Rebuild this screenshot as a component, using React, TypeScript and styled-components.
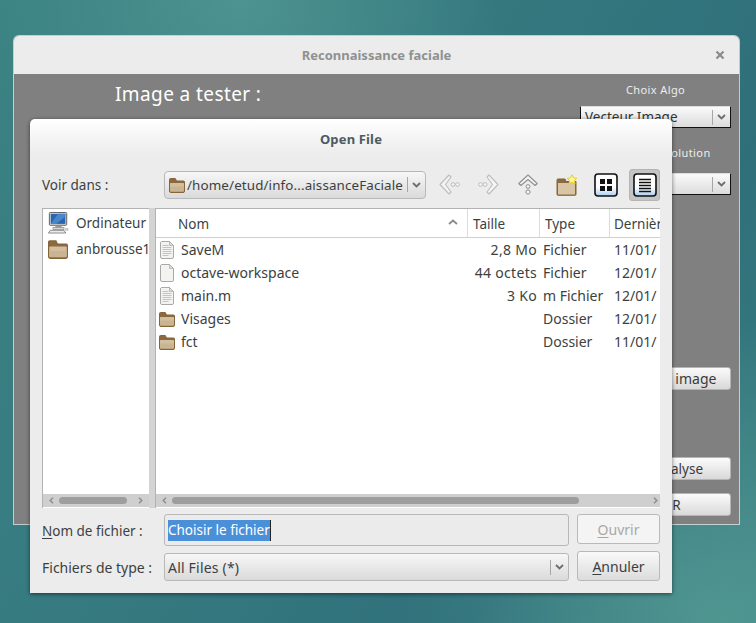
import React from "react";
import styled, { createGlobalStyle } from "styled-components";

const FONT = `"Noto Sans", "Open Sans", "DejaVu Sans", sans-serif`;

const Global = createGlobalStyle`
  html, body { margin: 0; padding: 0; background: #3f8584; }
  body { font-family: ${FONT}; }
`;

const Desktop = styled.div`
  position: relative;
  width: 756px;
  height: 623px;
  overflow: hidden;
  background:
    radial-gradient(ellipse 260px 220px at 240px 0px, #4d9390 0%, rgba(77,147,144,0) 100%),
    radial-gradient(ellipse 320px 300px at 720px 620px, #4f9590 0%, rgba(79,149,144,0) 100%),
    linear-gradient(120deg, #3b8283 0%, #35797f 45%, #2f6f7a 75%, #3b8083 100%);
`;

const ParentWindow = styled.section`
  position: absolute;
  left: 14px;
  top: 36px;
  width: 725px;
  height: 488px;
  border-radius: 5px 5px 0 0;
  background: #808080;
  box-shadow: 0 0 0 1px rgba(235, 235, 235, 0.75);
  display: flex;
  flex-direction: column;
`;

const ParentTitle = styled.header`
  height: 38px;
  flex: none;
  background: #ececec;
  border-radius: 5px 5px 0 0;
  display: flex;
  align-items: center;
  justify-content: center;
  position: relative;
  color: #8f9191;
  font-size: 13px;
  font-weight: 700;
`;

const CloseGlyph = styled.svg`
  position: absolute;
  right: 14px;
  top: 14px;
  width: 10px;
  height: 10px;
`;

const ParentBody = styled.div`
  flex: 1;
  display: flex;
  justify-content: space-between;
  padding: 0 8px 0 101px;
`;

const Heading = styled.h1`
  margin: 6px 0 0;
  font-size: 19px;
  line-height: 28px;
  font-weight: 400;
  color: #fff;
  letter-spacing: 0.4px;
`;

const SideColumn = styled.div`
  width: 151px;
  display: flex;
  flex-direction: column;
  align-items: stretch;
`;

const SideLabel = styled.div<{ $top: number }>`
  margin-top: ${(p) => p.$top}px;
  height: 18px;
  line-height: 18px;
  font-size: 11px;
  letter-spacing: 0.4px;
  color: #eee;
  text-align: center;
  white-space: nowrap;
`;

const SideSelect = styled.div<{ $top: number }>`
  margin-top: ${(p) => p.$top}px;
  height: 22px;
  box-sizing: border-box;
  border: 1px solid #111;
  border-top-color: #ddd;
  border-bottom-color: #111;
  background: linear-gradient(#fafafa, #dcdcdc);
  display: flex;
  align-items: center;
  justify-content: space-between;
  padding-left: 4px;
  font-size: 13.5px;
  color: #333;
`;

const SelectArrow = styled.span`
  width: 17px;
  height: 15px;
  border-left: 1px solid #a6a6a6;
  display: flex;
  align-items: center;
  justify-content: center;
  flex: none;
`;

const SideButton = styled.button<{ $top: number; $right?: number; $size?: number }>`
  margin-top: ${(p) => p.$top}px;
  height: 23px;
  box-sizing: border-box;
  border: 1px solid #b5b5b5;
  border-radius: 3px;
  background: linear-gradient(#fbfbfb, #d9d9d9);
  font: ${(p) => p.$size ?? 13.5}px ${FONT};
  color: #3a3a3a;
  padding: 0 ${(p) => p.$right ?? 0}px 0 0;
  white-space: nowrap;
`;

const Dialog = styled.section`
  position: absolute;
  left: 30px;
  top: 119px;
  width: 642px;
  height: 474px;
  box-sizing: border-box;
  border-radius: 5px 5px 0 0;
  background: linear-gradient(#ffffff 0, #ececec 36px);
  box-shadow: 0 1px 4px rgba(0, 0, 0, 0.55);
  padding: 0 12px;
  display: flex;
  flex-direction: column;
  color: #3a3f41;
`;

const DialogTitle = styled.header`
  height: 42px;
  line-height: 41px;
  text-align: center;
  font-size: 13px;
  font-weight: 700;
  letter-spacing: 0.15px;
  color: #4e5a61;
  flex: none;
`;

const Toolbar = styled.div`
  height: 47px;
  flex: none;
  display: flex;
  align-items: center;
`;

const FieldLabel = styled.label`
  width: 122px;
  flex: none;
  font-size: 13.5px;
  color: #3c3f41;
  white-space: nowrap;
  u { text-decoration-thickness: 1px; text-underline-offset: 2px; }
`;

const PathCombo = styled.div`
  width: 262px;
  height: 28px;
  box-sizing: border-box;
  border: 1px solid #b8b8b8;
  border-radius: 4px;
  background: linear-gradient(#f7f7f7, #dadada);
  display: flex;
  align-items: center;
  padding-left: 4px;
  gap: 2px;
  font-size: 13.4px;
  letter-spacing: 0.12px;
  color: #3c3f41;
  flex: none;
`;

const PathText = styled.span`
  flex: 1;
  white-space: nowrap;
  overflow: hidden;
`;

const ToolIcons = styled.div`
  display: flex;
  align-items: center;
  margin-left: 8px;
  gap: 8px;
`;

const ToolIcon = styled.span<{ $active?: boolean }>`
  width: 31px;
  height: 32px;
  flex: none;
  display: flex;
  align-items: center;
  justify-content: center;
  box-sizing: border-box;
  ${(p) =>
    p.$active
      ? `background:#c4c4c4;border:1px solid #b4b4b4;border-radius:3px;`
      : ""}
`;

const Panes = styled.div`
  height: 300px;
  flex: none;
  display: grid;
  grid-template-columns: 107px 505px;
  column-gap: 6px;
`;

const Pane = styled.div`
  position: relative;
  background: #fff;
  border: 1px solid #b2b2b2;
  border-right: none;
  border-bottom: none;
  display: flex;
  flex-direction: column;
  min-height: 0;
  overflow: hidden;
`;

const Places = styled.div`
  flex: 1;
  padding-top: 1px;
`;

const Place = styled.div`
  height: 26px;
  display: flex;
  align-items: center;
  gap: 8px;
  padding-left: 5px;
  font-size: 13.5px;
  white-space: nowrap;
  color: #3c3f41;
`;

const Header = styled.div`
  height: 28px;
  flex: none;
  display: grid;
  grid-template-columns: 312px 72px 70px 1fr;
  border-bottom: 1px solid #cfcfcf;
  font-size: 13.5px;
  color: #3c3f41;
`;

const HeaderCell = styled.div<{ $pad: number }>`
  position: relative;
  display: flex;
  align-items: center;
  padding-left: ${(p) => p.$pad}px;
  padding-top: 1px;
  border-right: 1px solid #dcdcdc;
  white-space: nowrap;
  overflow: hidden;
  &:last-child { border-right: none; }
`;

const SortArrow = styled.svg`
  position: absolute;
  right: 9px;
  top: 10px;
  width: 10px;
  height: 6px;
`;

const Rows = styled.div`
  flex: 1;
`;

const Row = styled.div`
  height: 23px;
  display: grid;
  grid-template-columns: 312px 72px 70px 1fr;
  align-items: center;
  font-size: 14px;
  color: #3c3f41;
  white-space: nowrap;
`;

const NameCell = styled.div`
  display: flex;
  align-items: center;
  padding-left: 3px;
  gap: 6px;
`;

const SizeCell = styled.div`
  text-align: right;
  padding-right: 3px;
  letter-spacing: 0.3px;
`;

const TextCell = styled.div<{ $pad: number }>`
  padding-left: ${(p) => p.$pad}px;
  overflow: hidden;
`;

const Scrollbar = styled.div`
  height: 13px;
  flex: none;
  background: #cfcfcf;
  border-bottom: 1px solid #fff;
  position: relative;
`;

const Thumb = styled.div<{ $l: number; $w: number }>`
  position: absolute;
  left: ${(p) => p.$l}px;
  width: ${(p) => p.$w}px;
  top: 3px;
  height: 7px;
  border-radius: 4px;
  background: #9e9e9e;
`;

const Chevron = styled.svg<{ $l: number }>`
  position: absolute;
  left: ${(p) => p.$l}px;
  top: 3px;
  width: 5px;
  height: 7px;
`;

const BottomRow = styled.div<{ $top: number; $h: number }>`
  margin-top: ${(p) => p.$top}px;
  height: ${(p) => p.$h}px;
  display: flex;
  align-items: flex-start;
  flex: none;
`;

const Entry = styled.div`
  width: 405px;
  height: 32px;
  box-sizing: border-box;
  border: 1px solid #b8b8b8;
  border-radius: 3px;
  background: #ebebeb;
  display: flex;
  align-items: center;
  padding: 1px 0 0 3px;
  font-size: 13.5px;
`;

const Selected = styled.span`
  background: #4a90d9;
  color: #fff;
  height: 21px;
  line-height: 21px;
  border-right: 1px solid #222;
  white-space: nowrap;
`;

const TypeCombo = styled.div`
  width: 405px;
  height: 28px;
  margin-top: 2px;
  box-sizing: border-box;
  border: 1px solid #b8b8b8;
  border-radius: 3px;
  background: linear-gradient(#f7f7f7, #dadada);
  display: flex;
  align-items: center;
  justify-content: space-between;
  padding-left: 3px;
  font-size: 14px;
  letter-spacing: 0.2px;
  color: #3c3f41;
`;

const DialogButton = styled.button<{ $disabled?: boolean }>`
  width: 83px;
  height: 30px;
  margin-left: 8px;
  box-sizing: border-box;
  border: 1px solid #b9b9b9;
  border-radius: 3px;
  background: ${(p) => (p.$disabled ? "#f4f4f4" : "linear-gradient(#f9f9f9, #dcdcdc)")};
  color: ${(p) => (p.$disabled ? "#a8a8a8" : "#3c3f41")};
  font: 14px ${FONT};
  padding: 1px 0 0;
  u { text-decoration-thickness: 1px; text-underline-offset: 2px; }
`;

const RowLabel = styled(FieldLabel)<{ $h: number; $size?: number }>`
  height: ${(p) => p.$h}px;
  line-height: ${(p) => p.$h}px;
  font-size: ${(p) => p.$size ?? 13.5}px;
`;

const Gutter = styled.i`
  position: absolute;
  top: 0;
  bottom: 0;
  left: 107px;
  width: 6px;
  background-image: radial-gradient(#d2d2d2 0.7px, transparent 0.8px);
  background-size: 2px 2px;
`;

const PanesWrap = styled.div`
  position: relative;
  flex: none;
`;

const Folder = ({ w = 16, h = 16 }: { w?: number; h?: number }) => (
  <svg width={w} height={h} viewBox="0 0 16 16" style={{ flex: "none" }}>
    <path d="M0.5 2.5V14a1.5 1.5 0 0 0 1.5 1.5h12a1.5 1.5 0 0 0 1.5-1.5V5a1 1 0 0 0-1-1H7.5L6.3 1.5H1.5a1 1 0 0 0-1 1z" fill="#8a6a3e" stroke="#856437" />
    <path d="M1.6 6h12.8a.6.6 0 0 1 .6.6V13.6a.9.9 0 0 1-.9.9H1.9a.9.9 0 0 1-.9-.9V6.6a.6.6 0 0 1 .6-.6z" fill="#d3bf9f" />
    <path d="M1 9.5h14v4a.9.9 0 0 1-.9.9H1.9a.9.9 0 0 1-.9-.9z" fill="#c9b493" />
  </svg>
);

const FileIcon = ({ lines }: { lines?: boolean }) => (
  <svg width="14" height="18" viewBox="0 0 14 18" style={{ flex: "none", margin: "0 1px" }}>
    <path d="M1.5 0.5H9.5L13.5 4.5V16a1.5 1.5 0 0 1-1.5 1.5H2A1.5 1.5 0 0 1 .5 16V2A1.5 1.5 0 0 1 1.5 .5z" fill="#f3f3f1" stroke="#a9aaa6" />
    <path d="M9.5 .5V4.5H13.5z" fill="#dcdcda" stroke="#a9aaa6" strokeWidth=".7" />
    {lines && (
      <path d="M2.5 4.5h6M2.5 6.5h9M2.5 8.5h9M2.5 10.5h9M2.5 12.5h9M2.5 14.5h6" stroke="#c4c4c2" strokeWidth="1" />
    )}
  </svg>
);

const Computer = () => (
  <svg width="21" height="22" viewBox="0 0 23 24" style={{ flex: "none", marginRight: -1 }}>
    <rect x="1.5" y="0.5" width="19" height="14" rx="1" fill="#d8d8d8" stroke="#55585a" />
    <rect x="3" y="2" width="16" height="11" fill="#2a66b0" />
    <path d="M3 13l8-11h8v3L9 13z" fill="#4a86cc" />
    <rect x="8" y="15" width="7" height="2" fill="#9a9a9a" />
    <rect x="5.5" y="17" width="12" height="2" fill="#d6d6d6" stroke="#777" strokeWidth=".6" />
    <path d="M0.5 23l2-3h15l2 3z" fill="#ececec" stroke="#666" strokeWidth=".8" />
    <path d="M19 18h3v2h-3z" fill="#cfcfcf" stroke="#aaa" strokeWidth=".5" />
  </svg>
);

const Down = ({ c = "#6d6d6d" }: { c?: string }) => (
  <svg width="9" height="6" viewBox="0 0 9 6">
    <path d="M1 1l3.5 3.5L8 1" fill="none" stroke={c} strokeWidth="1.8" />
  </svg>
);

const NavBack = ({ flip }: { flip?: boolean }) => (
  <svg width="21" height="21" viewBox="0 0 21 21" style={flip ? { transform: "scaleX(-1)" } : undefined}>
    <path d="M10 1L1 10.5 10 20l2-2-5.5-7.5L12 3z" fill="#f4f4f4" stroke="#bdbdbd" strokeWidth="1.1" strokeLinejoin="round" />
    <circle cx="14" cy="10.5" r="1.9" fill="#f4f4f4" stroke="#bdbdbd" />
    <circle cx="18.5" cy="10.5" r="1.9" fill="#f4f4f4" stroke="#bdbdbd" />
  </svg>
);

const NavUp = () => (
  <svg width="20" height="21" viewBox="0 0 20 21">
    <path d="M10 1L.8 9.5l2 2L10 5.5l7.2 6 2-2z" fill="#f4f4f4" stroke="#8f8f8f" strokeWidth="1.1" strokeLinejoin="round" />
    <circle cx="10" cy="12.5" r="1.9" fill="#f4f4f4" stroke="#8f8f8f" />
    <circle cx="10" cy="18" r="2.1" fill="#f4f4f4" stroke="#8f8f8f" />
  </svg>
);

const NewFolder = () => (
  <svg width="22" height="22" viewBox="0 0 22 22">
    <path d="M1 6a1 1 0 0 1 1-1h7l1.2 2.5H20v12.8a1 1 0 0 1-1 1H2a1 1 0 0 1-1-1z" fill="#8a6a3e" stroke="#856437" />
    <path d="M2 9h17v11a.5.5 0 0 1-.5.5h-16A.5.5 0 0 1 2 20z" fill="#d9c5a4" />
    <path d="M16 0.8l1.5 3 3.3.5-2.4 2.3.6 3.3L16 8.3l-3 1.6.6-3.3-2.4-2.3 3.3-.5z" fill="#fdf59a" stroke="#e6cf26" strokeWidth="1" />
  </svg>
);

const ViewFrame = styled.svg`
  width: 24px;
  height: 24px;
  display: block;
`;

const ViewBase = () => (
  <>
    <defs>
      <linearGradient id="vw" x1="0" y1="0" x2="0" y2="1">
        <stop offset="0.6" stopColor="#ffffff" />
        <stop offset="1" stopColor="#a9cdf0" />
      </linearGradient>
    </defs>
    <rect x="1" y="1" width="22" height="22" rx="3" fill="url(#vw)" stroke="#111" strokeWidth="1.6" />
  </>
);

const GridView = () => (
  <ViewFrame viewBox="0 0 24 24">
    <ViewBase />
    <path d="M6 6h5v5H6zM13 6h5v5h-5zM6 13h5v5H6zM13 13h5v5h-5z" fill="#111" />
  </ViewFrame>
);

const ListView = () => (
  <ViewFrame viewBox="0 0 24 24">
    <ViewBase />
    <path d="M6 6.5h12M6 9.5h12M6 12.5h12M6 15.5h12M6 18.5h12" stroke="#111" strokeWidth="1.3" />
  </ViewFrame>
);

const ChevL = ({ l, flip }: { l: number; flip?: boolean }) => (
  <Chevron $l={l} viewBox="0 0 5 7" style={flip ? { transform: "scaleX(-1)" } : undefined}>
    <path d="M4 .8L1.2 3.5 4 6.2" fill="none" stroke="#8c8c8c" strokeWidth="1.4" />
  </Chevron>
);

const files = [
  { name: "SaveM", size: "2,8 Mo", type: "Fichier", date: "11/01/", kind: "text" },
  { name: "octave-workspace", size: "44 octets", type: "Fichier", date: "12/01/", kind: "blank" },
  { name: "main.m", size: "3 Ko", type: "m Fichier", date: "12/01/", kind: "text" },
  { name: "Visages", size: "", type: "Dossier", date: "12/01/", kind: "folder" },
  { name: "fct", size: "", type: "Dossier", date: "11/01/", kind: "folder" },
];

export default function App() {
  return (
    <Desktop>
      <Global />
      <ParentWindow>
        <ParentTitle>
          Reconnaissance faciale
          <CloseGlyph viewBox="0 0 10 10">
            <path d="M1.5 1.5l7 7M8.5 1.5l-7 7" stroke="#8a8a8a" strokeWidth="2.2" />
          </CloseGlyph>
        </ParentTitle>
        <ParentBody>
          <Heading>Image a tester :</Heading>
          <SideColumn>
            <SideLabel $top={7}>Choix Algo</SideLabel>
            <SideSelect $top={7}>
              Vecteur Image
              <SelectArrow><Down /></SelectArrow>
            </SideSelect>
            <SideLabel $top={16}>Choix de Résolution</SideLabel>
            <SideSelect $top={11}>
              <span />
              <SelectArrow><Down /></SelectArrow>
            </SideSelect>
            <SideButton $top={172} $right={5} $size={14}>Charger une image</SideButton>
            <SideButton $top={67}>Lancer Analyse</SideButton>
            <SideButton $top={13} $right={6}>QUITTER</SideButton>
          </SideColumn>
        </ParentBody>
      </ParentWindow>

      <Dialog>
        <DialogTitle>Open File</DialogTitle>
        <Toolbar>
          <FieldLabel>Voir dans :</FieldLabel>
          <PathCombo>
            <Folder />
            <PathText>/home/etud/info...aissanceFaciale</PathText>
            <SelectArrow><Down /></SelectArrow>
          </PathCombo>
          <ToolIcons>
            <ToolIcon><NavBack /></ToolIcon>
            <ToolIcon><NavBack flip /></ToolIcon>
            <ToolIcon><NavUp /></ToolIcon>
            <ToolIcon><NewFolder /></ToolIcon>
            <ToolIcon><GridView /></ToolIcon>
            <ToolIcon $active><ListView /></ToolIcon>
          </ToolIcons>
        </Toolbar>
        <PanesWrap>
          <Panes>
            <Pane>
              <Places>
                <Place><Computer />Ordinateur</Place>
                <Place><Folder w={20} h={20} />anbrousse1</Place>
              </Places>
              <Scrollbar>
                <ChevL l={6} />
                <Thumb $l={16} $w={68} />
                <ChevL l={95} flip />
              </Scrollbar>
            </Pane>
            <Pane>
              <Header>
                <HeaderCell $pad={22}>
                  Nom
                  <SortArrow viewBox="0 0 10 6">
                    <path d="M1 5l4-3.5L9 5" fill="none" stroke="#8a8a8a" strokeWidth="1.8" />
                  </SortArrow>
                </HeaderCell>
                <HeaderCell $pad={5}>Taille</HeaderCell>
                <HeaderCell $pad={5}>Type</HeaderCell>
                <HeaderCell $pad={4}>Dernièr</HeaderCell>
              </Header>
              <Rows>
                {files.map((f) => (
                  <Row key={f.name}>
                    <NameCell>
                      {f.kind === "folder" ? <Folder /> : <FileIcon lines={f.kind === "text"} />}
                      {f.name}
                    </NameCell>
                    <SizeCell>{f.size}</SizeCell>
                    <TextCell $pad={3}>{f.type}</TextCell>
                    <TextCell $pad={4}>{f.date}</TextCell>
                  </Row>
                ))}
              </Rows>
              <Scrollbar>
                <ChevL l={6} />
                <Thumb $l={16} $w={407} />
                <ChevL l={497} flip />
              </Scrollbar>
            </Pane>
          </Panes>
          <Gutter />
        </PanesWrap>
        <BottomRow $top={6} $h={37}>
          <RowLabel $h={35}><u>N</u>om de fichier :</RowLabel>
          <Entry><Selected>Choisir le fichier</Selected></Entry>
          <DialogButton $disabled><u>O</u>uvrir</DialogButton>
        </BottomRow>
        <BottomRow $top={0} $h={30}>
          <RowLabel $h={34} $size={14}>Fichiers de type :</RowLabel>
          <TypeCombo>
            All Files (*)
            <SelectArrow><Down /></SelectArrow>
          </TypeCombo>
          <DialogButton><u>A</u>nnuler</DialogButton>
        </BottomRow>
      </Dialog>
    </Desktop>
  );
}
